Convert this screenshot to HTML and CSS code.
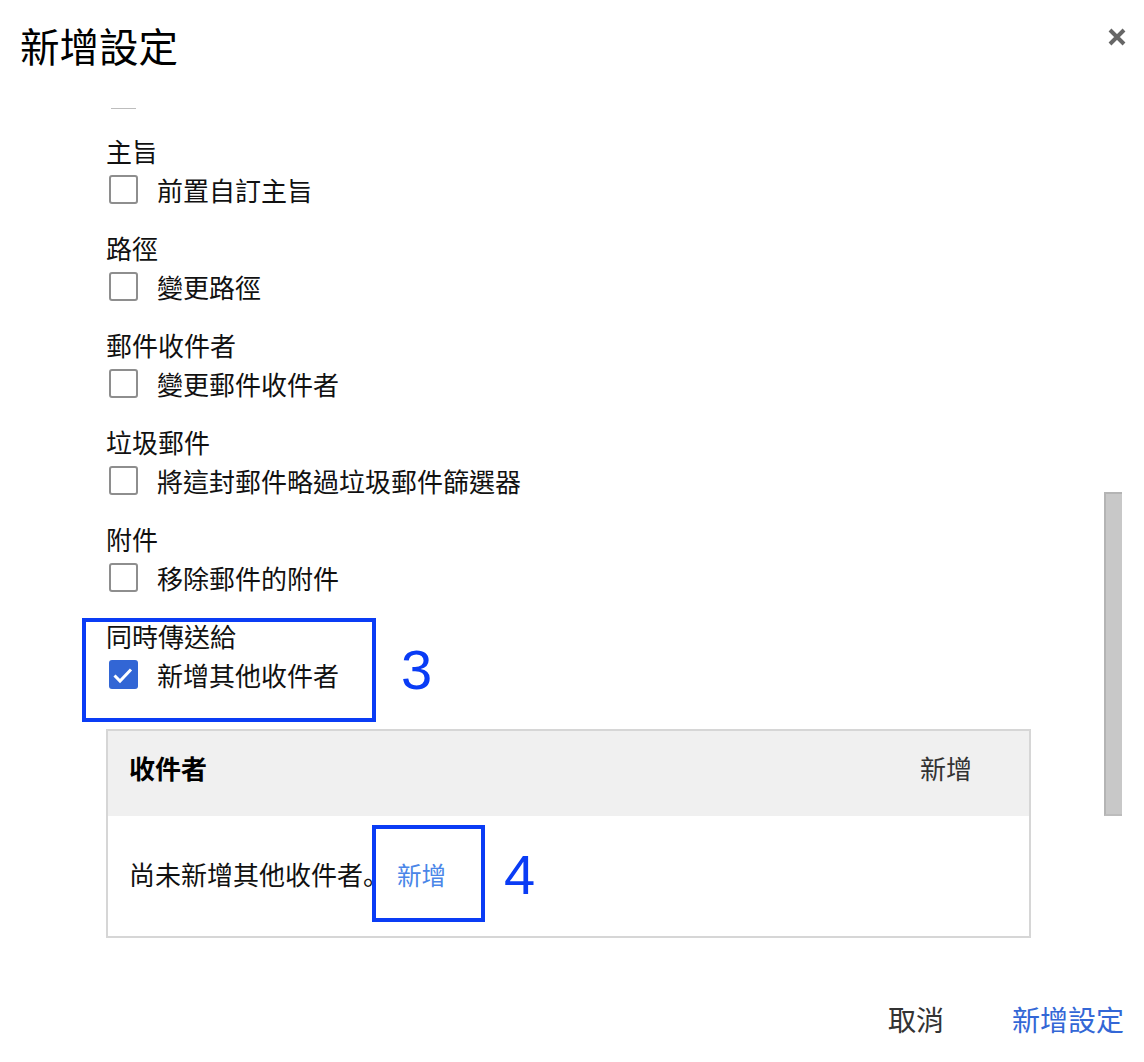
FILE: index.html
```html
<!DOCTYPE html>
<html lang="zh-Hant">
<head>
  <meta charset="UTF-8">
  <title>新增設定</title>
  <link rel="stylesheet" href="styles.css">
</head>
<body>
  <div class="dialog">
    <div class="dialog-header">
      <h1 class="dialog-title">新增設定</h1>
      <button class="close-btn" aria-label="關閉">
        <svg width="20" height="20" viewBox="0 0 20 20">
          <path d="M3 3 L17 17 M17 3 L3 17" stroke="#666" stroke-width="4" stroke-linecap="butt" fill="none"/>
        </svg>
      </button>
    </div>

    <div class="scroll-area">
      <div class="content">
        <div class="stub"></div>

        <!-- Settings -->
        <div class="section">
          <div class="section-label">主旨</div>
          <label class="row"><span class="checkbox"></span><span>前置自訂主旨</span></label>
        </div>

        <div class="section">
          <div class="section-label">路徑</div>
          <label class="row"><span class="checkbox"></span><span>變更路徑</span></label>
        </div>

        <div class="section">
          <div class="section-label">郵件收件者</div>
          <label class="row"><span class="checkbox"></span><span>變更郵件收件者</span></label>
        </div>

        <div class="section">
          <div class="section-label">垃圾郵件</div>
          <label class="row"><span class="checkbox"></span><span>將這封郵件略過垃圾郵件篩選器</span></label>
        </div>

        <div class="section">
          <div class="section-label">附件</div>
          <label class="row"><span class="checkbox"></span><span>移除郵件的附件</span></label>
        </div>

        <div class="section annotated">
          <div class="section-label">同時傳送給</div>
          <label class="row">
            <span class="checkbox checked">
              <svg width="29" height="29" viewBox="0 0 29 29">
                <path d="M5.5 15.5 L11 21 L22 9.5" stroke="#fff" stroke-width="3" fill="none"/>
              </svg>
            </span>
            <span>新增其他收件者</span>
          </label>
          <div class="mark mark-3"></div>
          <div class="mark-num num-3">3</div>
        </div>

        <!-- Recipients table -->
        <div class="recipients">
          <div class="recipients-head">
            <span class="head-title">收件者</span>
            <span class="head-add">新增</span>
          </div>
          <div class="recipients-body">
            <span>尚未新增其他收件者<span class="period" lang="zh-CN">。</span></span>
            <span class="add-wrap">
              <a class="add-link" href="#">新增</a>
              <span class="mark mark-4"></span>
              <span class="mark-num num-4">4</span>
            </span>
          </div>
        </div>
      </div>

      <div class="scroll-track">
        <div class="scroll-thumb"></div>
      </div>
    </div>

    <div class="dialog-footer">
      <button class="btn btn-cancel">取消</button>
      <button class="btn btn-primary">新增設定</button>
    </div>
  </div>
</body>
</html>
```

FILE: styles.css
```css
body {
  margin: 0;
  font-family: "Noto Sans CJK TC", "Noto Sans", sans-serif;
  color: #111;
  background: #fff;
}
.dialog {
  width: 1144px;
}
.dialog-header {
  display: flex;
  justify-content: space-between;
  align-items: flex-start;
  padding: 21px 0 0 20px;
}
.dialog-title {
  margin: 0;
  font-size: 39.5px;
  font-weight: normal;
  line-height: 48px;
  color: #000;
}
.close-btn {
  border: none;
  background: none;
  padding: 0;
  margin: 6px 17px 0 0;
  width: 20px;
  height: 20px;
}
.scroll-area {
  display: flex;
}
.content {
  flex: 1;
  padding: 0 73px 0 106px;
}
.stub {
  width: 25px;
  height: 1px;
  margin: 39px 0 24px 5px;
  background: #bdbdbd;
}
.section {
  margin-bottom: 21px;
}
.section-label {
  font-size: 26px;
  line-height: 36px;
  color: #111;
}
.row {
  display: flex;
  align-items: center;
  height: 40px;
  font-size: 26px;
  color: #111;
}
.checkbox {
  box-sizing: border-box;
  width: 29px;
  height: 29px;
  margin: 0 19px 0 3px;
  border: 2px solid #8e8e8e;
  border-radius: 3px;
  flex-shrink: 0;
}
.checkbox.checked {
  background: #3266d5;
  border-color: #3266d5;
  border-width: 0;
}
.checkbox svg {
  display: block;
}
.annotated {
  position: relative;
  margin-bottom: 35px;
}
.mark {
  position: absolute;
  box-sizing: border-box;
  border: 4px solid #0a3cf5;
}
.mark-num {
  position: absolute;
  font-family: "Liberation Sans", Arial, sans-serif;
  font-size: 56px;
  line-height: 56px;
  color: #0a3cf5;
}
.mark-3 {
  left: -24px;
  top: 0;
  width: 294px;
  height: 104px;
}
.num-3 {
  left: 295px;
  top: 24px;
}
.recipients {
  border: 2px solid #d6d6d6;
}
.recipients-head {
  display: flex;
  justify-content: space-between;
  align-items: center;
  box-sizing: border-box;
  height: 85px;
  padding: 0 57px 12px 21px;
  background: #f0f0f0;
  font-size: 26px;
}
.head-title {
  font-weight: bold;
  color: #000;
}
.head-add {
  color: #333;
}
.recipients-body {
  display: flex;
  align-items: center;
  box-sizing: border-box;
  height: 120px;
  padding: 0 21px 6px;
  font-size: 26px;
  color: #111;
}
.period {
  font-family: "Noto Sans CJK SC", sans-serif;
}
.add-wrap {
  position: relative;
  margin-left: 8px;
}
.add-link {
  font-size: 24.5px;
  color: #4a86e8;
  text-decoration: none;
}
.mark-4 {
  left: -25px;
  top: -30px;
  width: 113px;
  height: 97px;
}
.num-4 {
  left: 107px;
  top: -8px;
}
.scroll-track {
  width: 18px;
  margin-right: 22px;
}
.scroll-thumb {
  box-sizing: border-box;
  height: 324px;
  margin-top: 423px;
  background: #c8c8c8;
  border-left: 2px solid #b4b4b4;
  border-top: 2px solid #b4b4b4;
  border-bottom: 2px solid #bcbcbc;
}
.dialog-footer {
  display: flex;
  justify-content: flex-end;
  align-items: center;
  padding: 61px 20px 0 0;
  gap: 68px;
}
.btn {
  border: none;
  background: none;
  padding: 0;
  font-family: "Noto Sans CJK TC", "Noto Sans", sans-serif;
  font-size: 28px;
  line-height: 40px;
}
.btn-cancel {
  color: #333;
}
.btn-primary {
  color: #3367d6;
}
```
